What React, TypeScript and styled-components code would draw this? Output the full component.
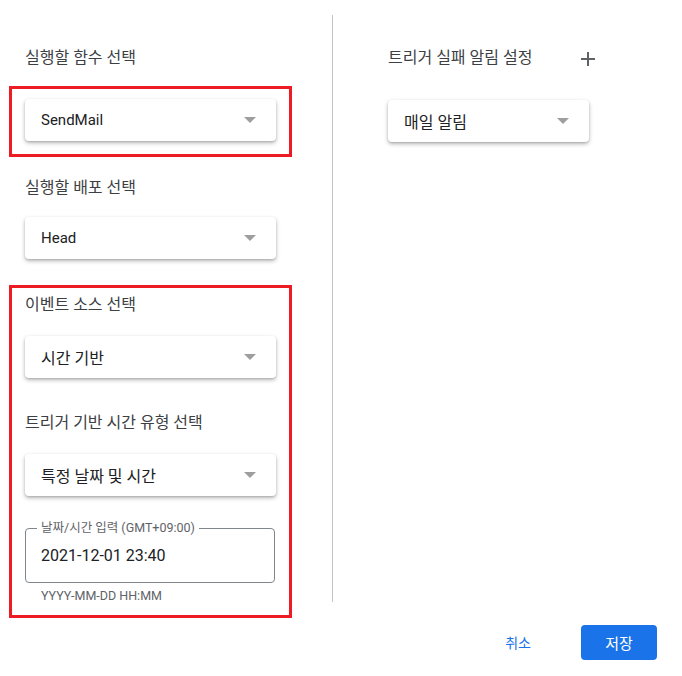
import styled, { createGlobalStyle } from 'styled-components';

const Global = createGlobalStyle`
    body {
        margin: 0;
        background: #ffffff;
        font-family: Roboto, 'Noto Sans CJK KR', sans-serif;
    }
`;

const Page = styled.div`
    width: 682px;
    height: 676px;
    display: flex;
    flex-direction: column;
    overflow: hidden;
`;
const Columns = styled.div`
    display: flex;
    padding-top: 15px;
`;
const LeftCol = styled.div`
    width: 332px;
    padding: 33px 0 0 9px;
    box-sizing: border-box;
    display: flex;
    flex-direction: column;
`;
const Divider = styled.div`
    width: 1px;
    height: 587px;
    background: #c4c4c4;
`;
const RightCol = styled.div`
    flex: 1;
    padding: 33px 0 0 55px;
    display: flex;
    flex-direction: column;
`;
const Label = styled.div<{ $gap?: number }>`
    height: 20px;
    line-height: 20px;
    font-size: 16px;
    color: #3c4043;
    margin-bottom: ${(p) => p.$gap ?? 19}px;
`;
const LeftLabel = styled(Label)`
    padding-left: 16px;
`;
const Highlight = styled.div<{ $pt: number; $pb: number }>`
    width: 283px;
    box-sizing: border-box;
    border: 3px solid #ed1c24;
    padding: ${(p) => p.$pt}px 13px ${(p) => p.$pb}px;
    display: flex;
    flex-direction: column;
`;
const SelectBox = styled.div<{ $w?: number; $mb?: number; $ko?: boolean }>`
    width: ${(p) => p.$w ?? 251}px;
    height: 42px;
    box-sizing: border-box;
    display: flex;
    align-items: center;
    justify-content: space-between;
    padding: 0 20px 0 16px;
    border-radius: 4px;
    background: #fff;
    box-shadow: 0 2px 4px rgba(0, 0, 0, 0.28), 0 1px 2px rgba(0, 0, 0, 0.12);
    font-size: ${(p) => (p.$ko ? 16 : 15)}px;
    color: #202124;
    margin-bottom: ${(p) => p.$mb ?? 0}px;
`;
const Caret = styled.span`
    width: 0;
    height: 0;
    border-left: 6px solid transparent;
    border-right: 6px solid transparent;
    border-top: 6px solid #9e9e9e;
`;
const Outlined = styled.fieldset`
    margin: 0;
    width: 250px;
    height: 62px;
    box-sizing: border-box;
    border: 1px solid #80868b;
    border-radius: 4px;
    padding: 0 15px;
    margin-top: -7px;
`;
const Legend = styled.legend`
    margin-left: -4px;
    padding: 0 4px;
    font-size: 12.5px;
    line-height: 14px;
    color: #5f6368;
`;
const Value = styled.div`
    font-size: 16px;
    color: #202124;
    line-height: 22px;
    margin-top: 10px;
`;
const Helper = styled.div`
    padding: 5px 0 0 16px;
    font-size: 12.5px;
    line-height: 16px;
    color: #5f6368;
`;
const RightHeader = styled.div`
    display: flex;
    align-items: flex-start;
    justify-content: space-between;
    width: 208px;
`;
const PlusButton = styled.svg`
    margin-top: 3px;
`;
const Footer = styled.div`
    display: flex;
    justify-content: flex-end;
    align-items: center;
    gap: 50px;
    padding: 6px 25px 0 0;
`;
const TextButton = styled.button`
    border: none;
    background: none;
    font-family: inherit;
    font-size: 14px;
    color: #1a73e8;
    padding: 8px 0;
`;
const PrimaryButton = styled.button`
    width: 76px;
    height: 35px;
    border: none;
    border-radius: 4px;
    background: #1a73e8;
    color: #fff;
    font-family: inherit;
    font-size: 15px;
`;

const Select = ({ value, w, mb, ko }: { value: string; w?: number; mb?: number; ko?: boolean }) => (
    <SelectBox $w={w} $mb={mb} $ko={ko}>
        <span>{value}</span>
        <Caret />
    </SelectBox>
);

export default function App() {
    return (
        <Page>
            <Global />
            <Columns>
                <LeftCol>
                    <LeftLabel $gap={18}>실행할 함수 선택</LeftLabel>
                    <Highlight $pt={10} $pb={13}>
                        <Select value="SendMail" />
                    </Highlight>
                    <LeftLabel style={{ marginTop: 21 }}>실행할 배포 선택</LeftLabel>
                    <div style={{ paddingLeft: 16 }}>
                        <Select value="Head" />
                    </div>
                    <Highlight $pt={7} $pb={11} style={{ marginTop: 26 }}>
                        <Label $gap={21}>이벤트 소스 선택</Label>
                        <Select value="시간 기반" mb={35} ko />
                        <Label $gap={21}>트리거 기반 시간 유형 선택</Label>
                        <Select value="특정 날짜 및 시간" mb={32} ko />
                        <Outlined>
                            <Legend>날짜/시간 입력 (GMT+09:00)</Legend>
                            <Value>2021-12-01 23:40</Value>
                        </Outlined>
                        <Helper>YYYY-MM-DD HH:MM</Helper>
                    </Highlight>
                </LeftCol>
                <Divider />
                <RightCol>
                    <RightHeader>
                        <Label $gap={32}>트리거 실패 알림 설정</Label>
                        <PlusButton width="16" height="16" viewBox="0 0 16 16">
                            <path d="M8 1v14M1 8h14" stroke="#5f6368" strokeWidth="2" />
                        </PlusButton>
                    </RightHeader>
                    <Select value="매일 알림" w={201} ko />
                </RightCol>
            </Columns>
            <Footer>
                <TextButton>취소</TextButton>
                <PrimaryButton>저장</PrimaryButton>
            </Footer>
        </Page>
    );
}
